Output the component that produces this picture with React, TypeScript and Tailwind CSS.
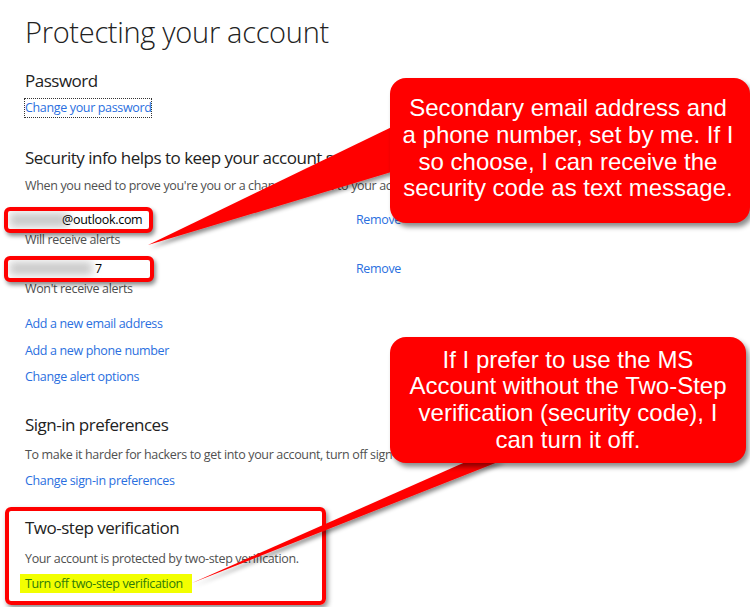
import React from "react";

const link = "text-[#2a6fe0] text-[12.5px] leading-[18px] tracking-[-0.35px] whitespace-nowrap";
const gray = "text-[#505050] text-[12.5px] leading-[18px] tracking-[-0.35px] whitespace-nowrap";
const h2 = "text-[17px] leading-[24px] tracking-[-0.5px] text-[#222] whitespace-nowrap";

export default function App() {
  return (
    <div className="relative w-[750px] h-[607px] overflow-hidden bg-white font-['Open_Sans',sans-serif]">
      <div className="flex flex-col pl-[25px]">
        <div className="mt-[12px] text-[29px] leading-[40px] font-light text-[#222] tracking-[-0.3px]">Protecting your account</div>
        <div className={`mt-[17px] ${h2}`}>Password</div>
        <div className="mt-[6px] flex">
          <span className={`${link} outline-1 outline-dotted outline-[#333] outline-offset-0`}>Change your password</span>
        </div>
        <div className={`mt-[29px] ${h2}`}>Security info helps to keep your account safe</div>
        <div className={`mt-[7px] ${gray}`}>When you need to prove you're you or a change is made to your account, we'll use this info</div>

        <div className="mt-[12px] flex items-center">
          <div className="ml-[-21px] w-[149px] h-[26px] rounded-[6px] border-4 border-[#ff0000] shadow-[2px_3px_4px_rgba(0,0,0,0.45)] bg-white relative overflow-hidden flex items-center">
            <div className="absolute left-[2px] top-[2px] w-[58px] h-[14px] bg-[#c8c8c8] blur-[4px]" />
            <span className="ml-[54px] relative text-[12.5px] leading-[18px] tracking-[-0.3px] text-black">@outlook.com</span>
          </div>
          <span className={`ml-[203px] ${link}`}>Remove</span>
        </div>
        <div className={`${gray} mt-[-2px]`}>Will receive alerts</div>

        <div className="mt-[7px] flex items-center">
          <div className="ml-[-21px] w-[150px] h-[26px] rounded-[6px] border-4 border-[#ff0000] shadow-[2px_3px_4px_rgba(0,0,0,0.45)] bg-white relative overflow-hidden flex items-center">
            <div className="absolute left-[2px] top-[2px] w-[82px] h-[13px] bg-[#c8c8c8] blur-[4px]" />
            <span className="ml-[87px] relative text-[12.5px] leading-[18px] text-black">7</span>
          </div>
          <span className={`ml-[202px] ${link}`}>Remove</span>
        </div>
        <div className={`${gray} mt-[-2px]`}>Won't receive alerts</div>

        <div className={`mt-[17px] ${link}`}>Add a new email address</div>
        <div className={`mt-[9px] ${link}`}>Add a new phone number</div>
        <div className={`mt-[8px] ${link}`}>Change alert options</div>

        <div className={`mt-[27px] ${h2}`}>Sign-in preferences</div>
        <div className={`mt-[9px] ${gray}`}>To make it harder for hackers to get into your account, turn off sign-in for some devices</div>
        <div className={`mt-[8px] ${link}`}>Change sign-in preferences</div>

        <div className="mt-[17px] ml-[-20px] w-[321px] h-[98px] rounded-[6px] border-4 border-[#ff0000] shadow-[2px_3px_5px_rgba(0,0,0,0.45)] pl-[16px] pt-[5px] flex flex-col items-start">
          <div className={h2}>Two-step verification</div>
          <div className={`mt-[10px] ${gray}`}>Your account is protected by two-step verification.</div>
          <div className="mt-[6px] ml-[-5px] w-[172px] h-[19px] bg-[#f2ff00] pl-[5px] flex items-center text-[12.5px] leading-[18px] tracking-[-0.35px] text-[#2d7a0a] whitespace-nowrap">Turn off two-step verification</div>
        </div>
      </div>

      <svg className="absolute inset-0 pointer-events-none" width="750" height="607" viewBox="0 0 750 607">
        <defs>
          <filter id="sh" x="-20%" y="-20%" width="140%" height="140%">
            <feDropShadow dx="2" dy="3" stdDeviation="2" floodColor="#000" floodOpacity="0.45" />
          </filter>
        </defs>
        <polygon points="398,124 398,170 148,245" fill="#ff0000" filter="url(#sh)" />
        <polygon points="470,460 503,460 192,583" fill="#ff0000" filter="url(#sh)" />
      </svg>

      <div className="absolute left-[390px] top-[78px] w-[360px] h-[145px] rounded-[16px] bg-[#ff0000] shadow-[3px_4px_5px_rgba(0,0,0,0.45)] flex items-center justify-center">
        <div className="text-center text-white font-['Liberation_Sans',Arial,sans-serif] text-[24px] leading-[26.7px] pr-[4px] pb-[4px] whitespace-nowrap">
          Secondary email address and<br />a phone number, set by me. If I<br />so choose, I can receive the<br />security code as text message.
        </div>
      </div>

      <div className="absolute left-[390px] top-[337px] w-[356px] h-[126px] rounded-[16px] bg-[#ff0000] shadow-[3px_4px_5px_rgba(0,0,0,0.45)] flex items-center justify-center">
        <div className="text-center text-white font-['Liberation_Sans',Arial,sans-serif] text-[24px] leading-[26.7px] whitespace-nowrap">
          If I prefer to use the MS<br />Account without the Two-Step<br />verification (security code), I<br />can turn it off.
        </div>
      </div>
    </div>
  );
}
